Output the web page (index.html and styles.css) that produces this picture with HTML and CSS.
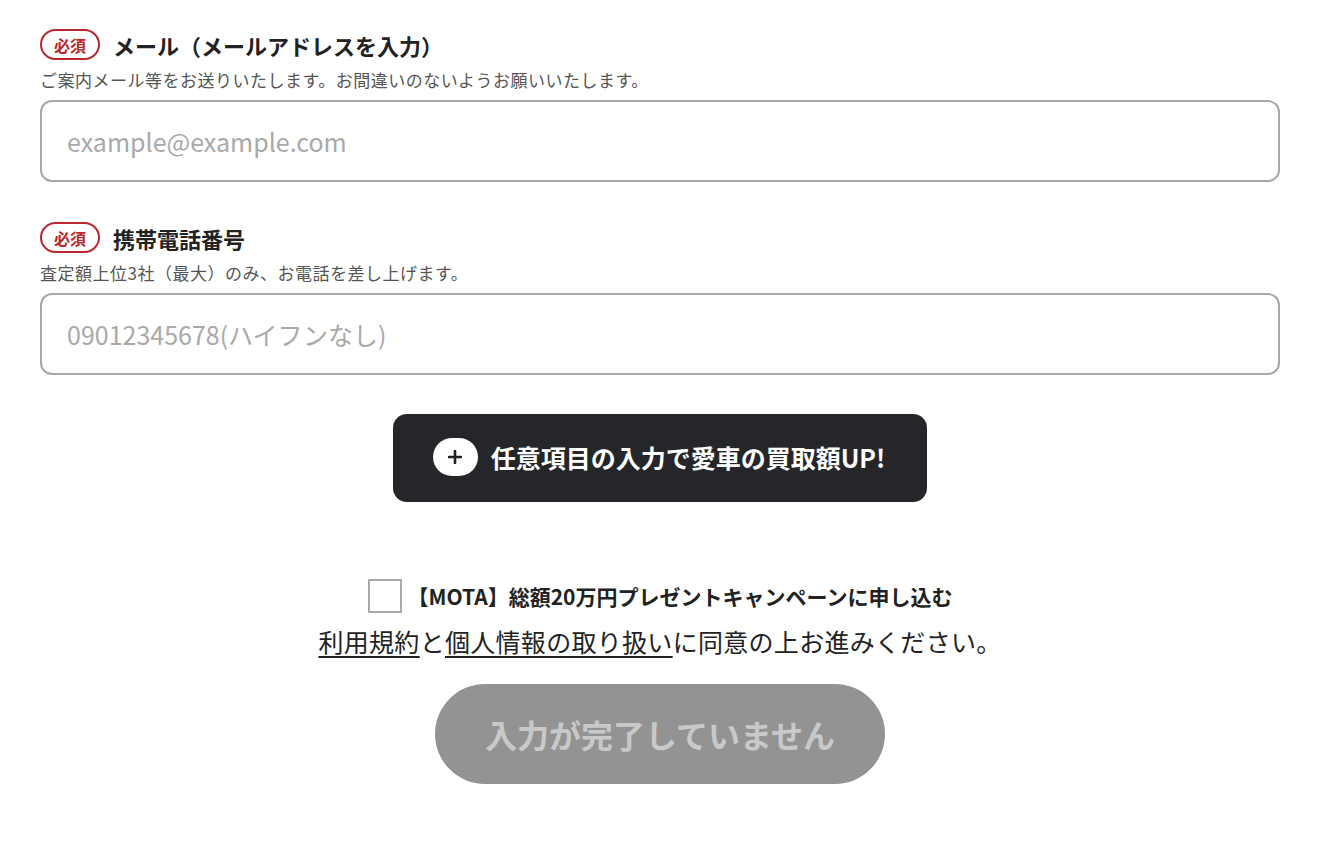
FILE: index.html
```html
<!DOCTYPE html>
<html lang="ja">
<head>
<meta charset="utf-8">
<title>フォーム</title>
<link rel="stylesheet" href="styles.css">
</head>
<body>
<main class="form">
  <section class="field">
    <div class="label-row">
      <span class="badge">必須</span>
      <span class="label">メール（メールアドレスを入力）</span>
    </div>
    <p class="help">ご案内メール等をお送りいたします。お間違いのないようお願いいたします。</p>
    <input class="text-input" type="email" placeholder="example@example.com">
  </section>
  <section class="field">
    <div class="label-row">
      <span class="badge">必須</span>
      <span class="label">携帯電話番号</span>
    </div>
    <p class="help">査定額上位3社（最大）のみ、お電話を差し上げます。</p>
    <input class="text-input" type="tel" placeholder="09012345678(ハイフンなし)">
  </section>
  <button class="optional-btn" type="button">
    <span class="plus">
      <svg width="14" height="14" viewBox="0 0 14 14"><path d="M7 1v12M1 7h12" stroke="#222" stroke-width="2.6" stroke-linecap="round"/></svg>
    </span>
    <span>任意項目の入力で愛車の買取額UP!</span>
  </button>
  <label class="campaign">
    <span class="checkbox"></span>
    <span class="campaign-text">【MOTA】総額20万円プレゼントキャンペーンに申し込む</span>
  </label>
  <p class="terms"><a href="#">利用規約</a>と<a href="#">個人情報の取り扱い</a>に同意の上お進みください。</p>
  <button class="submit" type="button" disabled>入力が完了していません</button>
</main>
</body>
</html>
```
FILE: styles.css
```css
* { box-sizing: border-box; }
html, body { margin: 0; padding: 0; background: #fff; }
body {
  font-family: "Noto Sans CJK JP", "Noto Sans", sans-serif;
  color: #222;
}
.form {
  display: flex;
  flex-direction: column;
  padding: 29px 40px 0;
}
.field { margin-bottom: 40px; }
.field:nth-of-type(2) { margin-bottom: 39px; }
.label-row {
  display: flex;
  align-items: center;
  gap: 13px;
  height: 31px;
}
.badge {
  width: 60px;
  height: 31px;
  border: 2px solid #b8282c;
  border-radius: 16px;
  color: #b8282c;
  font-size: 16px;
  font-weight: 700;
  display: flex;
  align-items: center;
  justify-content: center;
  line-height: 1;
}
.label {
  font-size: 22px;
  font-weight: 700;
  color: #222;
  line-height: 1;
}
.help {
  margin: 10px 0 10px;
  font-size: 17px;
  line-height: 20px;
  letter-spacing: 0.5px;
  color: #555;
}
.text-input {
  display: block;
  width: 100%;
  height: 82px;
  border: 2px solid #a8a8a8;
  border-radius: 12px;
  padding: 0 25px;
  font-family: inherit;
  font-size: 25px;
  color: #222;
  outline: none;
}
.text-input::placeholder { color: #a9a9a9; }
.optional-btn {
  align-self: center;
  width: 534px;
  height: 88px;
  background: #25262a;
  border: none;
  border-radius: 14px;
  color: #fff;
  font-family: inherit;
  font-size: 25px;
  font-weight: 700;
  display: flex;
  align-items: center;
  justify-content: center;
  gap: 13px;
  padding: 0 2px 2px 0;
}
.plus {
  width: 45px;
  height: 38px;
  background: #fff;
  border-radius: 19px;
  display: flex;
  align-items: center;
  justify-content: center;
}
.plus svg { display: block; }
.campaign {
  align-self: center;
  display: flex;
  align-items: center;
  gap: 6px;
  margin-top: 77px;
}
.checkbox {
  width: 34px;
  height: 34px;
  border: 2px solid #aaa;
  background: #fff;
}
.campaign-text {
  font-size: 21px;
  font-weight: 700;
  color: #222;
}
.terms {
  margin: 10px 0 0;
  text-align: center;
  font-size: 25px;
  line-height: 36px;
  letter-spacing: 0.3px;
  color: #222;
}
.terms a {
  color: #222;
  text-decoration: underline;
  text-underline-offset: 4px;
  text-decoration-thickness: 1.5px;
}
.submit {
  align-self: center;
  margin-top: 25px;
  width: 450px;
  height: 100px;
  border: none;
  border-radius: 50px;
  background: #939394;
  color: #c9c9c9;
  font-family: inherit;
  font-size: 32px;
  font-weight: 700;
}
```
